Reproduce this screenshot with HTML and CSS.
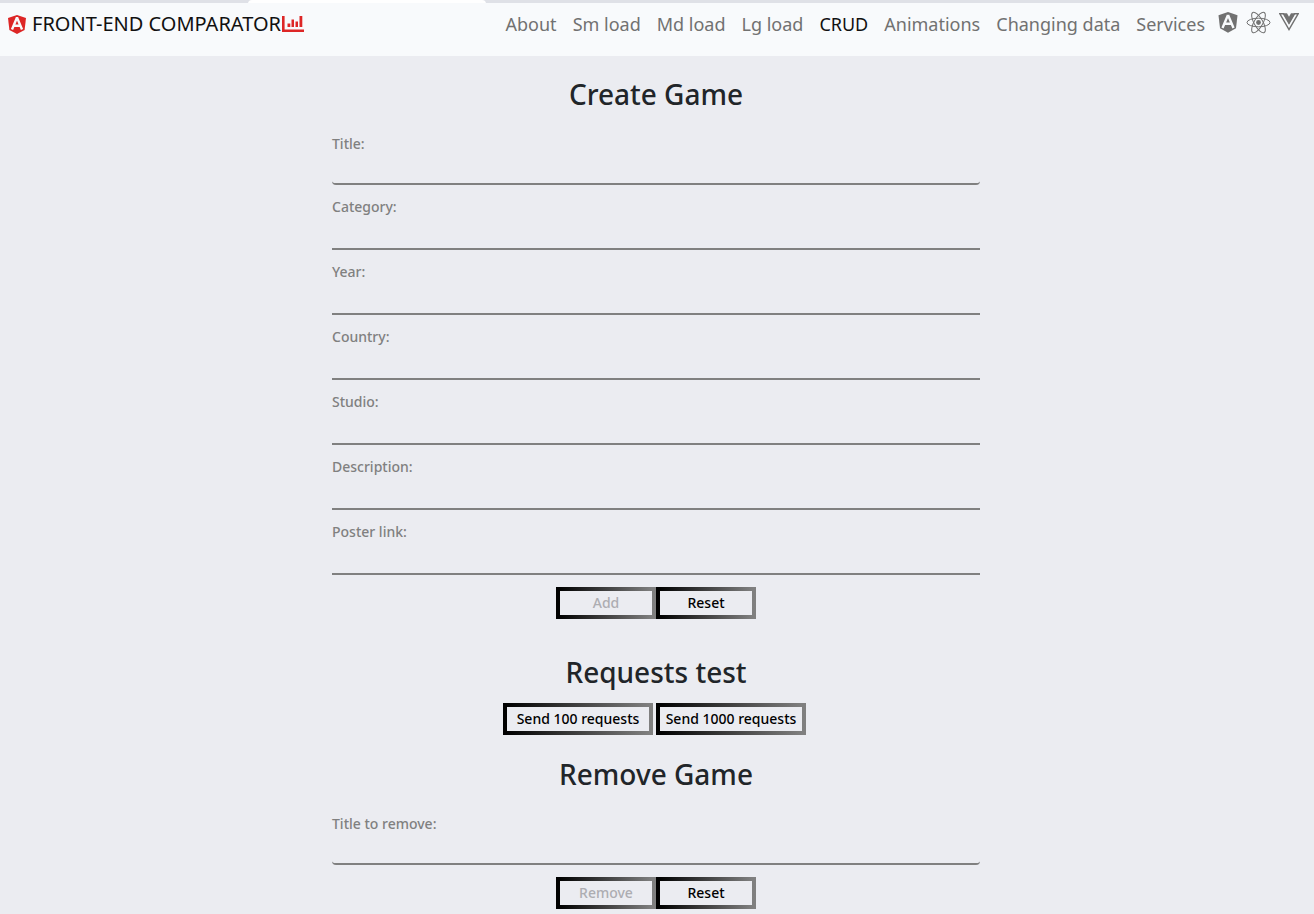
FILE: index.html
```html
<!DOCTYPE html>
<html lang="en">
<head>
<meta charset="utf-8">
<meta name="viewport" content="width=device-width, initial-scale=1">
<title>Front-end comparator</title>
<link rel="stylesheet" href="styles.css">
</head>
<body>
<div class="tab-strip"><span class="tab-edge"></span></div>
<header class="navbar">
  <a class="brand" href="#">
    <svg class="brand-logo" viewBox="0 0 18 19" aria-hidden="true"><path class="red" d="M9 0l9 3-1.400 12L9 19l-7.600-4L0 3z"/><path class="letter" d="M9 2.500L4 14.500M9 2.500L14 14.500M6 10.800h6"/></svg>
    <span>FRONT-END COMPARATOR</span>
    <svg class="brand-chart" viewBox="0 0 23 18" aria-hidden="true"><path class="red" d="M1 1h2.600v13.500H23V17H1zM6.500 8.500h2.800V12H6.500zM10.500 4.500h2.500V12h-2.500zM14.500 6.500h2.500V12h-2.500zM18.500 1h2.800v11h-2.800z"/></svg>
  </a>
  <nav class="nav">
    <a href="#">About</a>
    <a href="#">Sm load</a>
    <a href="#">Md load</a>
    <a href="#">Lg load</a>
    <a class="active" href="#">CRUD</a>
    <a href="#">Animations</a>
    <a href="#">Changing data</a>
    <a href="#">Services</a>
  </nav>
  <div class="frameworks">
    <a href="#" aria-label="Angular"><svg width="20" height="21" viewBox="0 0 20 21"><path class="gray" d="M10 0l9.500 3.300-1.500 13L10 20.800l-8-4.500L.5 3.300z"/><path class="letter" d="M10 3L4.500 16M10 3L15.500 16M6.500 11.800h7"/></svg></a>
    <a href="#" aria-label="React"><svg width="25" height="23" viewBox="0 0 25 23"><circle class="gray" cx="12.500" cy="11.500" r="2.400"/><g class="line"><ellipse cx="12.500" cy="11.500" rx="11.500" ry="4.300"/><ellipse cx="12.500" cy="11.500" rx="11.500" ry="4.300" transform="rotate(60 12.500 11.500)"/><ellipse cx="12.500" cy="11.500" rx="11.500" ry="4.300" transform="rotate(120 12.500 11.500)"/></g></svg></a>
    <a href="#" aria-label="Vue"><svg width="20" height="18" viewBox="0 0 20 18"><path class="line vue" d="M.9.8h3.600L10 10.400 15.500.8h3.600L10 16.600z"/><path class="gray" d="M4 .3h4L10 3.800 12 .3h4L10 10.900z"/></svg></a>
  </div>
</header>
<main class="content">
  <h2>Create Game</h2>
  <form class="form">
    <div class="field first"><label for="title">Title:</label><input id="title" type="text"></div>
    <div class="field"><label for="category">Category:</label><input id="category" type="text"></div>
    <div class="field"><label for="year">Year:</label><input id="year" type="text"></div>
    <div class="field"><label for="country">Country:</label><input id="country" type="text"></div>
    <div class="field"><label for="studio">Studio:</label><input id="studio" type="text"></div>
    <div class="field"><label for="description">Description:</label><input id="description" type="text"></div>
    <div class="field"><label for="poster">Poster link:</label><input id="poster" type="text"></div>
    <div class="actions"><button class="btn" type="submit" disabled>Add</button><button class="btn" type="reset">Reset</button></div>
  </form>
  <h2 class="requests-title">Requests test</h2>
  <div class="requests"><button class="btn wide" type="button">Send 100 requests</button><button class="btn wide" type="button">Send 1000 requests</button></div>
  <h2>Remove Game</h2>
  <form class="form">
    <div class="field first"><label for="remove">Title to remove:</label><input id="remove" type="text"></div>
    <div class="actions"><button class="btn" type="submit" disabled>Remove</button><button class="btn" type="reset">Reset</button></div>
  </form>
</main>
</body>
</html>
```
FILE: styles.css
```css
* { box-sizing: border-box; }
body {
  margin: 0;
  background: #ebecf1;
  color: #212529;
  font-family: "Noto Sans", "Open Sans", sans-serif;
  font-size: 14px;
  line-height: 24px;
}
.tab-strip { height: 3px; padding-left: 248px; background: #dfe1e7; overflow: hidden; }
.tab-edge { display: block; width: 238px; height: 8px; border-radius: 8px; background: #fff; }
.navbar {
  display: flex;
  align-items: flex-start;
  height: 53px;
  padding: 6px 15px 0 8px;
  background: #f8fafc;
}
.brand { display: flex; align-items: center; color: #111; text-decoration: none; font-size: 20px; line-height: 30px; white-space: nowrap; }
.brand-logo { width: 18px; height: 19px; margin-right: 6px; }
.brand-chart { width: 23px; height: 18px; }
.red { fill: #dd2626; }
.gray { fill: #717171; }
.letter { fill: none; stroke: #f8fafc; stroke-width: 2.4; }
.line { fill: none; stroke: #717171; stroke-width: 1; }
.vue { stroke-width: 1.4; }
.nav { display: flex; gap: 16px; margin-left: auto; font-size: 18px; line-height: 30px; white-space: nowrap; }
.nav a { color: #717171; text-decoration: none; }
.nav .active { color: #111; }
.frameworks { display: flex; align-items: center; gap: 8px; height: 26px; margin-left: 13px; }
.frameworks svg { display: block; }
.content { padding: 19px 2px 5px 0; }
h2 { margin: 0 0 19px; font-size: 28px; font-weight: 500; line-height: 38px; text-align: center; }
.form { width: 50%; min-width: 300px; max-width: 648px; margin: 0 auto; }
.field { padding-top: 10px; }
.field label { display: block; color: #808080; font-weight: 500; }
.field input {
  display: block;
  width: 100%;
  height: 31px;
  border: 0;
  border-bottom: 2px solid #808080;
  background: transparent;
  font: inherit;
}
.first { padding-top: 0; }
.first input { height: 29px; border-radius: 4px; }
.actions { display: flex; justify-content: center; padding-top: 12px; }
.btn {
  width: 100px;
  height: 32px;
  padding: 0;
  border: 4px solid;
  border-image: linear-gradient(to right, #000, #808080) 1;
  background: transparent;
  color: #000;
  font: inherit;
  font-weight: 500;
  white-space: nowrap;
}
.btn:disabled { color: #adadb2; }
.wide { width: 150px; }
h2.requests-title { margin: 34px 0 12px; }
.requests { display: flex; justify-content: center; gap: 3px; margin-bottom: 20px; padding-right: 3px; }
```
